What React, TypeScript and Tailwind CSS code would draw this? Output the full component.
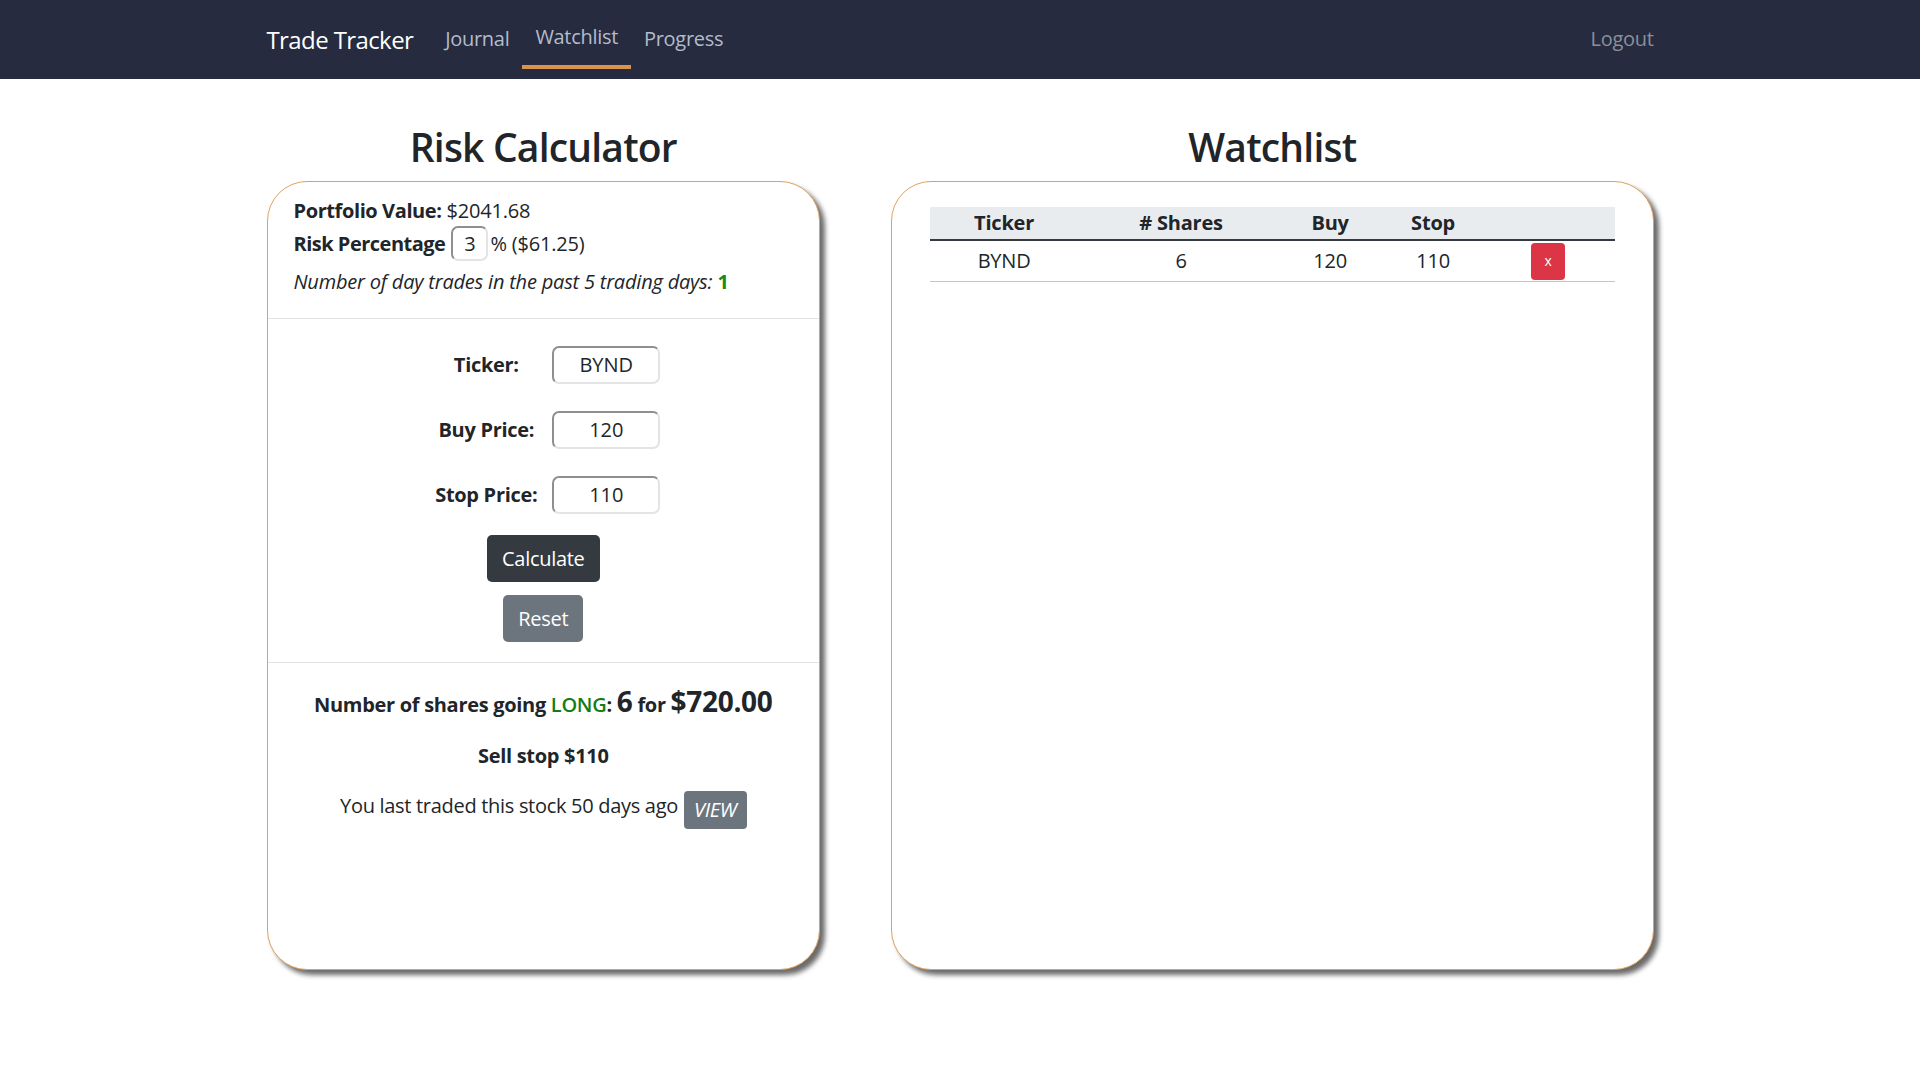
import React from "react";

const font = { fontFamily: '"Open Sans", "Noto Sans", sans-serif' };

function Field({ label, value }: { label: string; value: string }) {
  return (
    <div className="flex items-center justify-center">
      <div className="w-[120px] text-center font-bold text-[20px] leading-[30px] tracking-[-0.3px]">{label}</div>
      <div className="ml-[6px] w-[108px] h-[38px] rounded-[7px] border-2 border-t-[#8f8f8f] border-l-[#8f8f8f] border-r-[#e4e4e4] border-b-[#e4e4e4] flex items-center justify-center text-[20px] leading-[30px]">
        {value}
      </div>
    </div>
  );
}

export default function App() {
  return (
    <div className="min-h-screen bg-white text-[#212529]" style={font}>
      <nav className="h-[79px] bg-[#262b3f]">
        <div className="w-[1387px] mx-auto h-full flex items-start">
          <div className="mt-[21px] text-[24px] leading-[37px] tracking-[-0.6px] text-white mr-[19px]">Trade Tracker</div>
          <div className="mt-[24px] px-[13px] text-[20px] leading-[30px] tracking-[-0.3px] text-[#b3bccb]">Journal</div>
          <div className="mt-[22px] px-[13px] pb-[13px] border-b-4 border-[#d9934b] text-[20px] leading-[30px] tracking-[-0.3px] text-[#b3bccb]">Watchlist</div>
          <div className="mt-[24px] px-[13px] text-[20px] leading-[30px] tracking-[-0.3px] text-[#b3bccb]">Progress</div>
          <div className="ml-auto mt-[24px] text-[20px] leading-[30px] tracking-[-0.3px] text-[#8b8f9b]">Logout</div>
        </div>
      </nav>

      <main className="w-[1387px] mx-auto flex gap-[71px] pt-[44px]">
        <section className="w-[554px] flex flex-col">
          <h2 className="text-center text-[39px] leading-[48px] font-semibold tracking-[-0.8px] mb-[10px]">Risk Calculator</h2>
          <div className="h-[789px] rounded-[40px] border border-[#e0a060] shadow-[5px_5px_5px_#6b6b6b] bg-white flex flex-col">
            <div className="px-[26px] pt-[14px] pb-[21px] border-b border-[#e3e3e3] text-[20px] leading-[30px] tracking-[-0.2px]">
              <div>
                <span className="font-bold tracking-[-0.4px]">Portfolio Value:</span> $2041.68
              </div>
              <div className="flex items-center h-[35px]">
                <span className="font-bold tracking-[-0.5px]">Risk Percentage</span>
                <span className="ml-[6px] w-[37px] h-[35px] rounded-[7px] border-2 border-t-[#8f8f8f] border-l-[#8f8f8f] border-r-[#e4e4e4] border-b-[#e4e4e4] flex items-center justify-center">3</span>
                <span className="ml-[2px]">% ($61.25)</span>
              </div>
              <div className="mt-[6px] italic">
                Number of day trades in the past 5 trading days: <span className="font-bold not-italic text-[#1a8a1a]">1</span>
              </div>
            </div>

            <div className="pt-[27px] pb-[20px] border-b border-[#e3e3e3] flex flex-col items-center">
              <div className="flex flex-col gap-[27px] w-full">
                <Field label="Ticker:" value="BYND" />
                <Field label="Buy Price:" value="120" />
                <Field label="Stop Price:" value="110" />
              </div>
              <div className="mt-[21px] h-[47px] px-[15px] rounded-[5px] bg-[#343a40] text-white text-[20px] leading-[30px] tracking-[-0.3px] flex items-center">Calculate</div>
              <div className="mt-[13px] h-[47px] px-[15px] rounded-[5px] bg-[#6c757d] text-white text-[20px] leading-[30px] tracking-[-0.3px] flex items-center">Reset</div>
            </div>

            <div className="pt-[24px] flex flex-col items-center text-[20px] leading-[30px]">
              <div className="font-bold tracking-[-0.3px]">
                Number of shares going <span className="text-[#137d13] font-semibold">LONG</span>: <span className="text-[28px] leading-[28px]">6</span> for <span className="text-[28px] leading-[28px]">$720.00</span>
              </div>
              <div className="mt-[21px] font-bold tracking-[-0.3px]">Sell stop $110</div>
              <div className="mt-[20px] flex items-start tracking-[-0.3px]">
                <span>You last traded this stock 50 days ago</span>
                <span className="ml-[6px] h-[38px] px-[10px] py-[4px] rounded-[4px] bg-[#6c757d] text-white italic">VIEW</span>
              </div>
            </div>
          </div>
        </section>

        <section className="w-[763px] flex flex-col">
          <h2 className="text-center text-[39px] leading-[48px] font-semibold tracking-[-0.8px] mb-[10px]">Watchlist</h2>
          <div className="h-[789px] rounded-[40px] border border-[#e0a060] shadow-[5px_5px_5px_#6b6b6b] bg-white px-[38px] pt-[25px]">
            <div className="text-[20px] leading-[30px] tracking-[-0.2px]">
              <div className="grid grid-cols-[148px_206px_92px_114px_124px] bg-[#e9ecef] border-b-2 border-[#343a40] py-[1px] font-bold text-center">
                <div>Ticker</div>
                <div># Shares</div>
                <div>Buy</div>
                <div>Stop</div>
                <div></div>
              </div>
              <div className="grid grid-cols-[148px_206px_92px_114px_124px] items-center h-[41px] border-b border-[#bcc6cf] text-center">
                <div>BYND</div>
                <div>6</div>
                <div>120</div>
                <div>110</div>
                <div className="flex">
                  <span className="ml-[41px] w-[34px] h-[37px] rounded-[4px] bg-[#dc3545] text-white text-[14px] flex items-center justify-center">x</span>
                </div>
              </div>
            </div>
          </div>
        </section>
      </main>
    </div>
  );
}
